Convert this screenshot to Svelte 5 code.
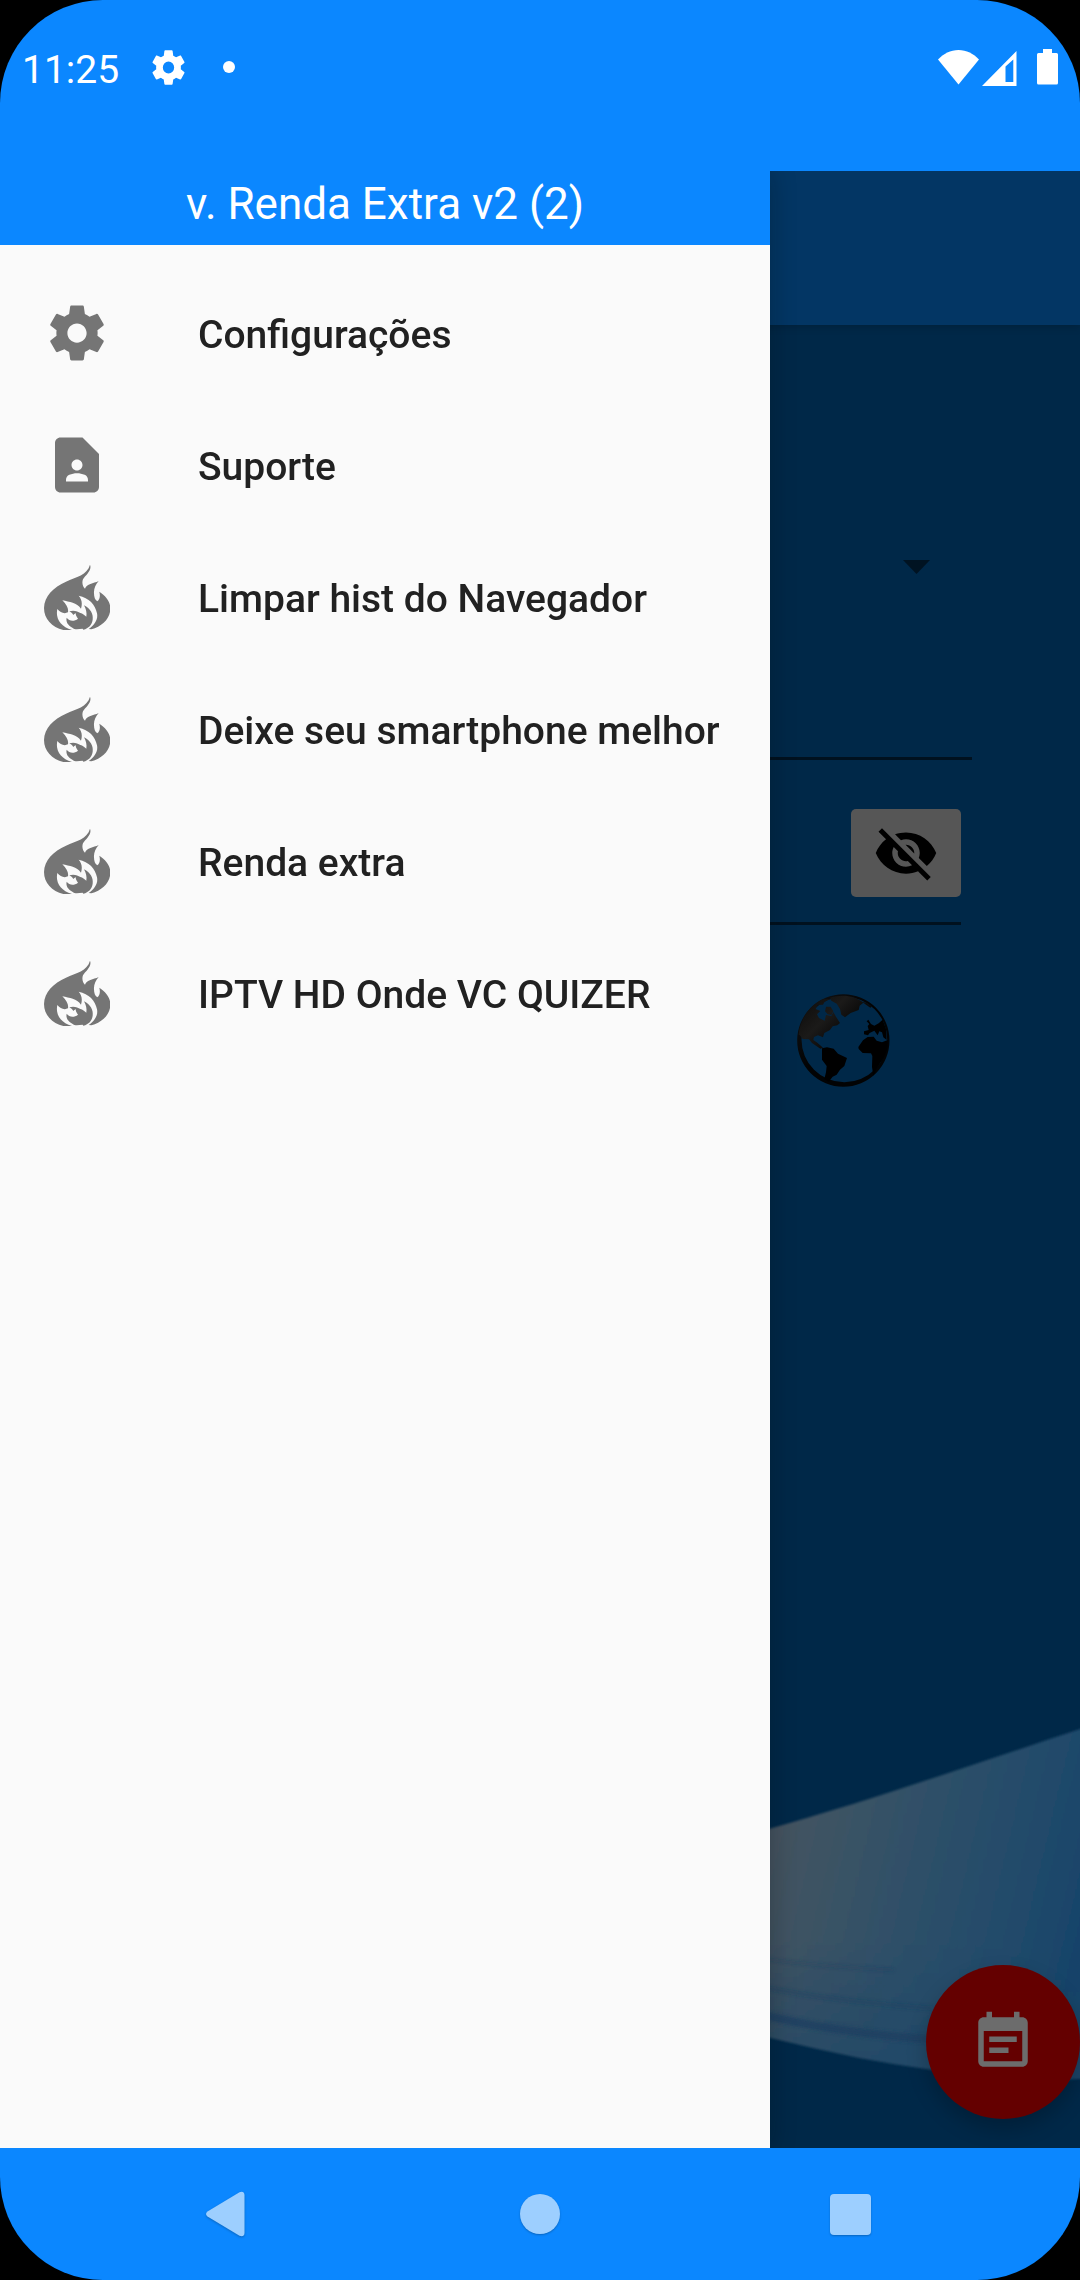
<script>
    const gear = "M19.14 12.94c.04-.3.06-.61.06-.94 0-.32-.02-.64-.07-.94l2.03-1.58c.18-.14.23-.41.12-.61l-1.92-3.32c-.12-.22-.37-.29-.59-.22l-2.39.96c-.5-.38-1.03-.7-1.62-.94l-.36-2.54c-.04-.24-.24-.41-.48-.41h-3.84c-.24 0-.43.17-.47.41l-.36 2.54c-.59.24-1.13.57-1.62.94l-2.39-.96c-.22-.08-.47 0-.59.22L2.74 8.87c-.12.21-.08.47.12.61l2.03 1.58c-.05.3-.09.63-.09.94s.02.64.07.94l-2.03 1.58c-.18.14-.23.41-.12.61l1.92 3.32c.12.22.37.29.59.22l2.39-.96c.5.38 1.03.7 1.62.94l.36 2.54c.05.24.24.41.48.41h3.84c.24 0 .44-.17.47-.41l.36-2.54c.59-.24 1.13-.56 1.62-.94l2.39.96c.22.08.47 0 .59-.22l1.92-3.32c.12-.22.07-.47-.12-.61l-2.01-1.58z"

    let title = "v. Renda Extra v2 (2)"

    let items = [
        { icon: "gear", label: "Configurações" },
        { icon: "contact", label: "Suporte" },
        { icon: "flame", label: "Limpar hist do Navegador" },
        { icon: "flame", label: "Deixe seu smartphone melhor" },
        { icon: "flame", label: "Renda extra" },
        { icon: "flame", label: "IPTV HD Onde VC QUIZER" }
    ]
</script>

<div class="screen">
    <header class="status">
        <span class="time">11:25</span>
        <svg class="status-gear" viewBox="2.4 2.2 19.2 19.6" preserveAspectRatio="none">
            <path fill-rule="evenodd" d="{gear}M12 15.3a3.3 3.3 0 1 1 0-6.6 3.3 3.3 0 0 1 0 6.6z" />
        </svg>
        <span class="dot"></span>
        <svg class="wifi" viewBox="0 0 41 35">
            <path d="M0 9.6C5.5 3.5 12.5 0 20.5 0S35.5 3.5 41 9.6L20.5 34.6z" />
        </svg>
        <svg class="signal" viewBox="0 0 35 35">
            <path fill-rule="evenodd" d="M0 35L34.5 0V35zM23.5 15.5V31H31.3V8.5z" />
        </svg>
        <svg class="battery" viewBox="0 0 21 36">
            <path d="M6 0h9v4h4.5a1.5 1.5 0 0 1 1.5 1.5v28.5a1.5 1.5 0 0 1-1.5 1.5h-18A1.5 1.5 0 0 1 0 34V5.5A1.5 1.5 0 0 1 1.5 4H6z" />
        </svg>
    </header>

    <main class="body">
        <div class="page">
            <div class="toolbar"></div>
            <div class="arrow"></div>
            <div class="line"></div>
            <button class="eye" aria-label="Mostrar senha">
                <svg viewBox="0 0 24 24">
                    <path d="M12 7c2.76 0 5 2.24 5 5 0 .65-.13 1.26-.36 1.83l2.92 2.92c1.51-1.26 2.7-2.89 3.43-4.75-1.73-4.39-6-7.5-11-7.5-1.4 0-2.74.25-3.98.7l2.16 2.16C10.74 7.13 11.35 7 12 7zM2 4.27l2.28 2.28.46.46C3.08 8.3 1.78 10.02 1 12c1.73 4.39 6 7.5 11 7.5 1.55 0 3.03-.3 4.38-.84l.42.42L19.73 22 21 20.73 3.27 3 2 4.27zM7.53 9.8l1.55 1.55c-.05.21-.08.43-.08.65 0 1.66 1.34 3 3 3 .22 0 .44-.03.65-.08l1.55 1.55c-.67.33-1.41.53-2.2.53-2.76 0-5-2.24-5-5 0-.79.2-1.53.53-2.2zm4.31-.78l3.15 3.15.02-.16c0-1.66-1.34-3-3-3l-.17.01z" />
                </svg>
            </button>
            <div class="line short"></div>
            <svg class="globe" viewBox="45 36 288 288">
                <defs>
                    <linearGradient id="land" x1="60" y1="60" x2="190" y2="190" gradientUnits="userSpaceOnUse">
                        <stop offset="0" stop-color="#0c0b0a" />
                        <stop offset=".5" stop-color="#1b1a19" />
                        <stop offset="1" stop-color="#020202" />
                    </linearGradient>
                    <linearGradient id="rim" x1="0" y1="0" x2="1" y2="1">
                        <stop offset="0" stop-color="#141416" />
                        <stop offset=".45" stop-color="#020304" />
                    </linearGradient>
                </defs>
                <path fill="url(#rim)" fill-rule="evenodd" d="M190 43a138 138 0 1 1 0 277 138 138 0 0 1 0-277zM193 50a128 128 0 1 0 0 257 128 128 0 0 0 0-257z" />
                <g fill="url(#land)">
                    <path d="M56 165C58 125 85 78 128 58L150 57 134 65 129 74 113 75 107 87 121 93 111 103 117 114 134 122 138 105 154 108 160 96 168 110 180 129 172 136 158 139 150 150 133 159 129 172 114 166 102 171 100 180 112 188 129 203 121 206 96 189 87 178 68 177 59 165z" />
                    <path d="M138 80l14 0 8 14-6 11-11-2-8-9zM150 53C185 42 225 46 250 68l-11 9-3 13-24 9-17 13-11-8-4-17-10-16-16-9z" />
                    <path d="M246 65l14 3 15 12-4 3-15-10z" />
                </g>
                <path d="M126 205l15-3 20 4 13 15 27 13-8 24-13 11-10 15-12 6-12 15-13-8 5-20 2-19-14-19zM235 201l14-20 14-10 18-1 9 12 16 5 17-7-1 26-11 28-20 29-11 24-4-26 1-33-4-8-25-1-12-12zM252 154l14-4-3-12 5-6-8-8 5-5 8 13 10 5 13-7 12-11 10 28 2 33-10-8-4-15-8-3-5 12-10-14-14 7-5 7-12-3z" />
            </svg>

            <svg class="wave" viewBox="30 54 930 1290">
                <defs>
                    <linearGradient id="sheet" x1="30" y1="520" x2="960" y2="740" gradientUnits="userSpaceOnUse">
                        <stop offset="0" stop-color="#445260" />
                        <stop offset=".14" stop-color="#3d5364" />
                        <stop offset=".45" stop-color="#2e5068" />
                        <stop offset=".75" stop-color="#234b6b" />
                        <stop offset="1" stop-color="#17436a" />
                    </linearGradient>
                    <linearGradient id="lower" x1="0" y1="720" x2="0" y2="1100" gradientUnits="userSpaceOnUse">
                        <stop offset="0" stop-color="#1d4666" stop-opacity="0" />
                        <stop offset="1" stop-color="#1d4666" stop-opacity=".6" />
                    </linearGradient>
                    <filter id="soft"><feGaussianBlur stdDeviation="5" /></filter>
                    <filter id="edge"><feGaussianBlur stdDeviation="2.5" /></filter>
                </defs>
                <g filter="url(#edge)">
                    <path fill="url(#sheet)" d="M0 394C300 312 620 200 1000 74V1134Q880 1146 700 1130Q500 1112 300 1074Q150 1044 0 1006z" />
                    <path fill="url(#lower)" d="M0 720H1000V1134Q880 1146 700 1130Q500 1112 300 1074Q150 1044 0 1006z" />
                </g>
                <g class="streaks" filter="url(#soft)">
                    <path stroke-width="10" opacity=".25" d="M0 776Q180 800 400 810" />
                    <path stroke-width="12" opacity=".4" d="M0 860Q230 905 520 925" />
                    <path stroke-width="24" opacity=".85" d="M0 942Q230 1000 520 1018" />
                </g>
            </svg>
            <button class="fab" aria-label="Eventos">
                <svg viewBox="0 0 24 24">
                    <path d="M17 10H7v2h10v-2zm2-7h-1V1h-2v2H8V1H6v2H5c-1.11 0-1.99.9-1.99 2L3 19c0 1.1.89 2 2 2h14c1.1 0 2-.9 2-2V5c0-1.1-.9-2-2-2zm0 16H5V8h14v11zm-5-5H7v2h7v-2z" />
                </svg>
            </button>
        </div>

        <aside class="drawer">
            <h1>{title}</h1>
            <nav>
                {#each items as item}
                    <a class="item" href="#top">
                        {#if item.icon === "gear"}
                            <svg viewBox="0 0 24 24">
                                <path fill-rule="evenodd" d="M19.43 12.98c.04-.32.07-.64.07-.98s-.03-.66-.07-.98l2.11-1.65c.19-.15.24-.42.12-.64l-2-3.46c-.12-.22-.39-.3-.61-.22l-2.49 1c-.52-.4-1.08-.73-1.69-.98l-.38-2.65C14.46 2.18 14.25 2 14 2h-4c-.25 0-.46.18-.49.42l-.38 2.65c-.61.25-1.17.59-1.69.98l-2.49-1c-.23-.09-.49 0-.61.22l-2 3.46c-.13.22-.07.49.12.64l2.11 1.65c-.04.32-.07.65-.07.98s.03.66.07.98l-2.11 1.65c-.19.15-.24.42-.12.64l2 3.46c.12.22.39.3.61.22l2.49-1c.52.4 1.08.73 1.69.98l.38 2.65c.03.24.24.42.49.42h4c.25 0 .46-.18.49-.42l.38-2.65c.61-.25 1.17-.59 1.69-.98l2.49 1c.23.09.49 0 .61-.22l2-3.46c.12-.22.07-.49-.12-.64l-2.11-1.65zM12 15.5c-1.93 0-3.5-1.57-3.5-3.5s1.57-3.5 3.5-3.5 3.5 1.57 3.5 3.5-1.57 3.5-3.5 3.5z" />
                            </svg>
                        {:else if item.icon === "contact"}
                            <svg viewBox="0 0 24 24">
                                <path fill-rule="evenodd" d="M14 2H6c-1.1 0-2 .9-2 2v16c0 1.1.9 2 2 2h12c1.1 0 2-.9 2-2V8l-6-6zM12 10c1.1 0 2 .9 2 2s-.9 2-2 2-2-.9-2-2 .9-2 2-2zm4 8H8v-.57c0-.81.48-1.53 1.22-1.85.85-.37 1.79-.58 2.78-.58.99 0 1.93.21 2.78.58.74.32 1.22 1.04 1.22 1.85V18z" />
                            </svg>
                        {:else}
                            <svg viewBox="42 42 198 198">
                                <path d="M180 44C187 62 166 76 159 88C155 98 158 110 165 116C170 101 190 101 206 93C197 103 191 116 192 130C192 141 195 150 202 154C210 148 211 137 208 125C228 138 240 154 241 173C242 205 218 228 184 238L176 237C193 225 205 208 201 190C196 164 177 143 146 137C155 147 158 160 153 176C140 158 119 156 97 151C110 164 116 175 114 187C102 193 91 187 82 177C76 205 91 229 126 240H100C66 232 42 207 42 174C43 138 70 112 108 95C138 81 172 75 180 44z" />
                                <path d="M110 203C118 214 132 215 144 206C139 198 136 194 138 188C150 187 160 192 169 200C171 188 168 177 162 166C181 176 191 192 188 209C186 224 176 235 160 239L158 236C145 237 135 240 127 233C114 226 107 215 110 203z" />
                                <path d="M118 184C129 180 142 182 153 191C144 187 133 190 130 195C127 190 123 187 118 184z" />
                            </svg>
                        {/if}
                        <span>{item.label}</span>
                    </a>
                {/each}
            </nav>
        </aside>
    </main>

    <footer class="navbar">
        <svg class="back" viewBox="0 0 39 46">
            <path d="M1.5 20.5L33.5 1.2Q38 -.5 38.5 4V42Q38 46.5 33.5 44.8L1.5 25.5Q-1.5 23 1.5 20.5z" />
        </svg>
        <span class="home"></span>
        <span class="recent"></span>
    </footer>
</div>

<style>
    :global(body) {
        margin: 0;
        background: #000;
    }

    .screen {
        width: 1080px;
        height: 2280px;
        display: flex;
        flex-direction: column;
        overflow: hidden;
        border-radius: 103px;
        background: #0b87ff;
        font-family: Roboto, sans-serif;
    }

    svg {
        display: block;
        flex: none;
    }

    button {
        border: 0;
        padding: 0;
    }

    .status {
        height: 136px;
        margin-bottom: 35px;
        box-sizing: border-box;
        padding: 0 22px;
        display: flex;
        align-items: center;
        color: #fff;
        fill: #fff;
    }

    .time {
        width: 130px;
        font-size: 39px;
        line-height: 46px;
        padding-top: 3px;
    }

    .status-gear {
        width: 33px;
        height: 35px;
        margin-bottom: 1px;
    }

    .dot {
        width: 12px;
        height: 12px;
        margin-left: 38px;
        margin-bottom: 2px;
        border-radius: 50%;
        background: #fff;
    }

    .wifi {
        width: 41px;
        height: 35px;
        margin-left: auto;
        margin-bottom: 1px;
    }

    .signal {
        width: 35px;
        height: 35px;
        margin-left: 3px;
    }

    .battery {
        width: 21px;
        height: 36px;
        margin-left: 20px;
        margin-bottom: 2px;
    }

    .body {
        position: relative;
        height: 1977px;
        overflow: hidden;
    }

    .page {
        height: 100%;
        display: flex;
        flex-direction: column;
        align-items: flex-end;
        background: #002848;
    }

    .toolbar {
        width: 100%;
        height: 154px;
        background: #033664;
        box-shadow: 0 2px 8px rgba(0, 0, 0, 0.18);
    }

    .arrow {
        width: 27px;
        height: 14px;
        margin: 235px 150px 0 0;
        background: #001322;
        clip-path: polygon(0 0, 100% 0, 50% 100%);
    }

    .line {
        width: 860px;
        height: 3px;
        margin: 183px 108px 0 0;
        background: #00111f;
    }

    .line.short {
        margin: 25px 119px 0 0;
    }

    .eye {
        width: 110px;
        height: 88px;
        margin: 49px 119px 0 0;
        display: flex;
        align-items: center;
        justify-content: center;
        border-radius: 5px;
        background: #565656;
    }

    .eye svg,
    .fab svg {
        width: 66px;
        height: 66px;
    }

    .globe {
        width: 96px;
        height: 96px;
        margin: 67px 189px 0 0;
    }

    .wave {
        position: absolute;
        right: 0;
        bottom: 0;
        width: 310px;
        height: 430px;
    }

    .streaks path {
        fill: none;
        stroke: #1d4161;
    }

    .fab {
        position: absolute;
        right: 0;
        bottom: 29px;
        width: 154px;
        height: 154px;
        display: flex;
        align-items: center;
        justify-content: center;
        border-radius: 50%;
        background: #640000;
        fill: #6c6c6c;
        box-shadow: 0 10px 20px rgba(0, 0, 0, 0.22);
    }

    .drawer {
        position: absolute;
        top: 0;
        left: 0;
        width: 770px;
        height: 100%;
        background: #fafafa;
        box-shadow: 0 0 24px rgba(8, 12, 12, 0.28);
    }

    h1 {
        height: 74px;
        margin: 0;
        padding-top: 7px;
        box-sizing: border-box;
        background: #0b87ff;
        color: #fff;
        font-size: 44px;
        font-weight: 400;
        line-height: 52px;
        text-align: center;
    }

    nav {
        padding-top: 22px;
    }

    .item {
        height: 132px;
        padding-left: 44px;
        display: flex;
        align-items: center;
        gap: 88px;
        color: #212121;
        font-size: 39px;
        font-weight: 500;
        text-decoration: none;
        white-space: nowrap;
    }

    .item span {
        padding-top: 4px;
    }

    .item svg {
        width: 66px;
        height: 66px;
        fill: #757575;
    }

    .navbar {
        height: 132px;
        display: flex;
        align-items: center;
    }

    .back {
        width: 39px;
        height: 46px;
        margin-left: 206px;
        fill: #9dcfff;
        filter: drop-shadow(0 1px 1px rgba(0, 0, 0, 0.25));
    }

    .home,
    .recent {
        width: 40px;
        height: 40px;
        margin-left: 275px;
        border-radius: 50%;
        background: #9dcfff;
        box-shadow: 0 1px 2px rgba(0, 0, 0, 0.25);
    }

    .recent {
        width: 41px;
        height: 41px;
        margin-left: 270px;
        border-radius: 4px;
    }
</style>
